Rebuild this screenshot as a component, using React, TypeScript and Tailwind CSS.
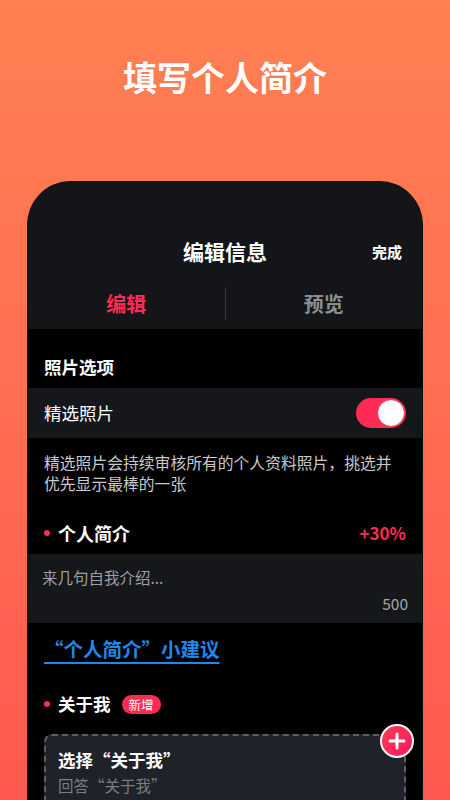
export default function App() {
  return (
    <div className="h-[800px] w-[450px] overflow-hidden bg-gradient-to-b from-[#ff8052] to-[#ff5850] font-['Noto_Sans_CJK_SC','Liberation_Sans',sans-serif]">
      <h1 className="pt-[56px] text-center text-[34px] font-bold leading-[42px] text-white">
        填写个人简介
      </h1>

      <div className="mx-[27px] mt-[83px] overflow-hidden rounded-t-[44px] border border-b-0 border-[#0c0d10] bg-[#131519]">
        {/* header */}
        <div className="relative flex h-[96px] items-start justify-center pt-[55px]">
          <span className="text-[21px] font-bold leading-[28px] text-white">编辑信息</span>
          <span className="absolute right-[20px] top-[56px] text-[15px] font-bold leading-[28px] text-white">完成</span>
        </div>

        {/* tabs */}
        <div className="flex h-[51px] items-center">
          <div className="flex-1 text-center text-[20px] font-bold text-[#fe2c55]">编辑</div>
          <div className="h-[33px] w-px bg-[#33363c]" />
          <div className="flex-1 text-center text-[20px] font-bold text-[#8b8f95]">预览</div>
        </div>

        {/* content */}
        <div className="bg-black pb-10">
          <div className="h-[59px] px-4 pt-[27px] text-[17.5px] font-bold leading-[22px] text-white">照片选项</div>

          <div className="flex h-[50px] items-center justify-between bg-[#15171b] px-4">
            <span className="text-[17.5px] text-white">精选照片</span>
            <div className="flex h-[30px] w-[50px] items-center justify-end rounded-full bg-[#fe2c55] p-[1px]">
              <div className="h-[28px] w-[28px] rounded-full border border-[#fe2c55] bg-white" />
            </div>
          </div>

          <p className="px-4 pt-[14px] text-[15.8px] leading-[21px] text-[#c8cacd]">
            精选照片会持续审核所有的个人资料照片，挑选并优先显示最棒的一张
          </p>

          <div className="mt-[23px] flex h-[32px] items-center justify-between px-4">
            <div className="flex items-center gap-[8px]">
              <span className="h-[6px] w-[6px] rounded-full bg-[#fe2c55]" />
              <span className="text-[18px] font-bold text-white">个人简介</span>
            </div>
            <span className="text-[17px] font-bold text-[#fe2c55]">+30%</span>
          </div>

          <div className="mt-[5px] h-[69px] bg-[#15171b] px-[14px]">
            <div className="pt-[12px] text-[15.5px] leading-[22px] text-[#9d9fa3]">来几句自我介绍...</div>
            <div className="pt-[4px] text-right text-[15.5px] leading-[22px] text-[#a3a5a8]">500</div>
          </div>

          <div className="px-[16px] pt-[12px]">
            <span className="text-[19.5px] font-bold leading-[28px] text-[#1f88ec] underline decoration-[2px] underline-offset-[5px]">
              “个人简介”小建议
            </span>
          </div>

          <div className="mt-[28px] flex h-[26px] items-center gap-[8px] px-4">
            <span className="h-[6px] w-[6px] rounded-full bg-[#fe2c55]" />
            <span className="text-[17.5px] font-bold text-white">关于我</span>
            <span className="ml-[3px] rounded-full bg-[#fe2c55] px-[7px] text-[12.5px] leading-[19px] text-white">新增</span>
          </div>

          <div className="relative mx-[16px] mt-[17px]">
            <div className="h-[100px] rounded-[8px] border-2 border-dashed border-[#5a5e66] bg-[#1f2229] px-[12px] pt-[11px]">
              <div className="text-[17.5px] font-bold leading-[26px] text-white">选择“关于我”</div>
              <div className="text-[15.5px] leading-[24px] text-[#797d85]">回答“关于我”</div>
            </div>
            <div className="absolute -right-[8px] -top-[10px] flex h-[34px] w-[34px] items-center justify-center rounded-full border-2 border-white bg-gradient-to-br from-[#ff3a4f] to-[#ff0f62]">
              <svg width="18" height="18" viewBox="0 0 18 18">
                <path d="M9 2v14M2 9h14" stroke="white" strokeWidth="3" strokeLinecap="round" />
              </svg>
            </div>
          </div>
        </div>
      </div>
    </div>
  )
}
